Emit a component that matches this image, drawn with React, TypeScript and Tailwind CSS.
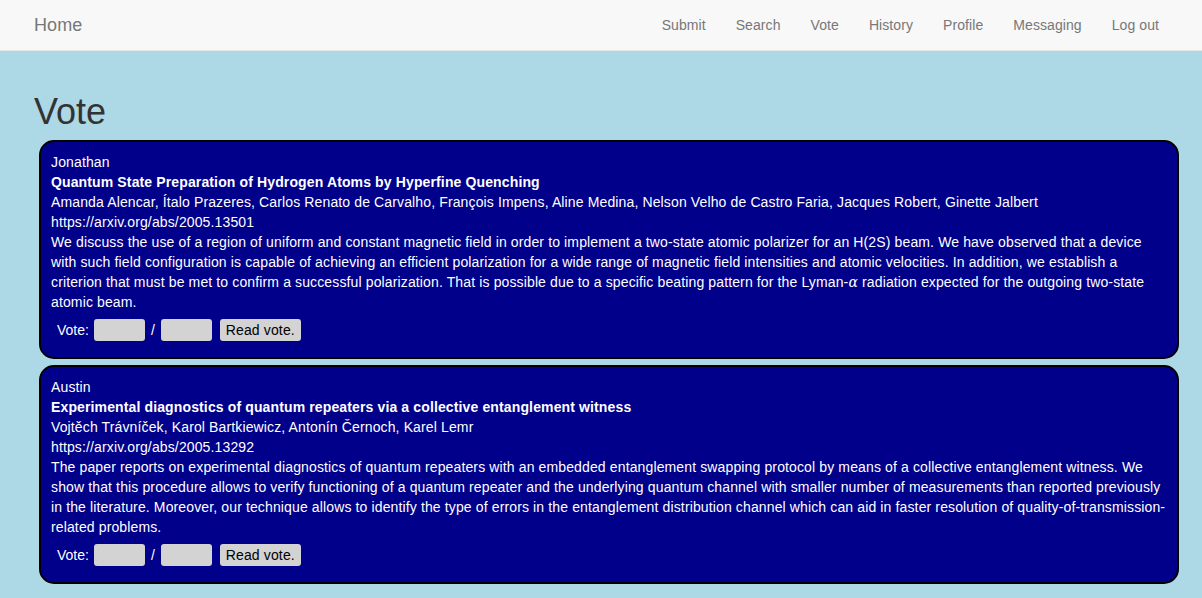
import React from "react";

type Paper = {
  user: string;
  title: string;
  authors: string;
  url: string;
  abstract: React.ReactNode;
};

const papers: Paper[] = [
  {
    user: "Jonathan",
    title: "Quantum State Preparation of Hydrogen Atoms by Hyperfine Quenching",
    authors:
      "Amanda Alencar, Ítalo Prazeres, Carlos Renato de Carvalho, François Impens, Aline Medina, Nelson Velho de Castro Faria, Jacques Robert, Ginette Jalbert",
    url: "https://arxiv.org/abs/2005.13501",
    abstract: (
      <>
        We discuss the use of a region of uniform and constant magnetic field in order to implement a two-state atomic polarizer for an H(2S) beam. We have observed that a device with such field configuration is capable of achieving an efficient polarization for a wide range of magnetic field intensities and atomic velocities. In addition, we establish a criterion that must be met to confirm a successful polarization. That is possible due to a specific beating pattern for the Lyman-<span className="italic font-['DejaVu_Serif',serif]">α</span> radiation expected for the outgoing two-state atomic beam.
      </>
    ),
  },
  {
    user: "Austin",
    title: "Experimental diagnostics of quantum repeaters via a collective entanglement witness",
    authors: "Vojtěch Trávníček, Karol Bartkiewicz, Antonín Černoch, Karel Lemr",
    url: "https://arxiv.org/abs/2005.13292",
    abstract:
      "The paper reports on experimental diagnostics of quantum repeaters with an embedded entanglement swapping protocol by means of a collective entanglement witness. We show that this procedure allows to verify functioning of a quantum repeater and the underlying quantum channel with smaller number of measurements than reported previously in the literature. Moreover, our technique allows to identify the type of errors in the entanglement distribution channel which can aid in faster resolution of quality-of-transmission-related problems.",
  },
];

const navLinks = ["Submit", "Search", "Vote", "History", "Profile", "Messaging", "Log out"];

function Card({ p }: { p: Paper }) {
  return (
    <div className="bg-[#00008b] border-2 border-black rounded-[15px] pt-[10px] px-[10px] pb-[16px] text-white text-[14px] leading-[20px] tracking-[0.13px]">
      <div>{p.user}</div>
      <div className="font-bold">{p.title}</div>
      <div>{p.authors}</div>
      <div>{p.url}</div>
      <div>{p.abstract}</div>
      <div className="mt-[7px] h-[22px] flex items-center ml-[6px] tracking-normal">
        <span>Vote:</span>
        <input className="ml-[5px] w-[51px] h-[22px] bg-[#d3d3d3] rounded-[3px] border-0 outline-none" />
        <span className="mx-[6px]">/</span>
        <input className="w-[51px] h-[22px] bg-[#d3d3d3] rounded-[3px] border-0 outline-none" />
        <button className="ml-[8px] h-[22px] w-[81px] bg-[#d3d3d3] rounded-[3px] text-black text-[14px] tracking-[0.14px]">
          Read vote.
        </button>
      </div>
    </div>
  );
}

export default function App() {
  return (
    <div className="min-h-[598px] bg-[#add8e6] font-['Liberation_Sans',Arial,sans-serif]">
      <nav className="h-[51px] bg-[#f8f8f8] border-b border-[#e7e7e7] flex items-center justify-between pl-[34px] pr-[28px]">
        <span className="text-[18px] text-[#777] tracking-[0.1px]">Home</span>
        <div className="flex">
          {navLinks.map((l) => (
            <span key={l} className="px-[15px] text-[14px] text-[#777] leading-[20px] tracking-[0.08px]">
              {l}
            </span>
          ))}
        </div>
      </nav>
      <main className="pl-[34px] pr-[23px] pt-[41px] pb-[14px]">
        <h1 className="text-[36px] leading-[40px] text-[#333] m-0 mb-[8px] font-normal">Vote</h1>
        <div className="ml-[5px] flex flex-col gap-[6px]">
          {papers.map((p) => (
            <Card key={p.user} p={p} />
          ))}
        </div>
      </main>
    </div>
  );
}
